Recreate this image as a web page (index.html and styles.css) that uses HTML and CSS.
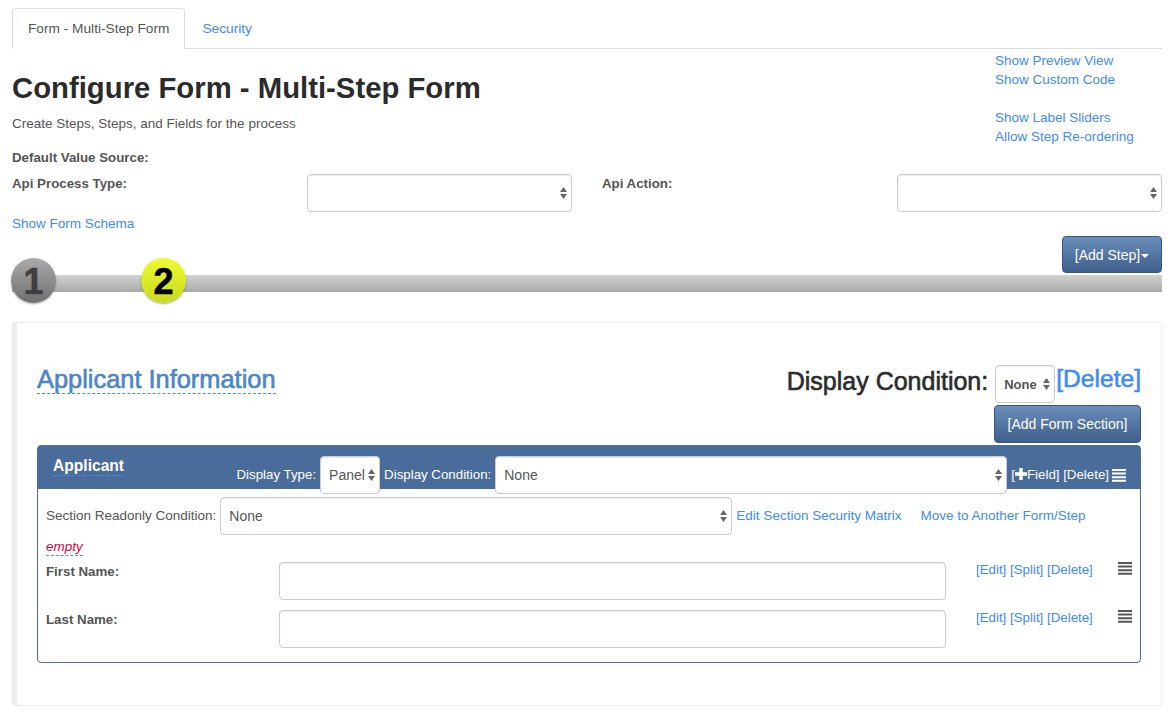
FILE: index.html
```html
<!DOCTYPE html>
<html lang="en">
<head>
    <meta charset="UTF-8">
    <meta name="viewport" content="width=device-width, initial-scale=1.0">
    <title>Configure Form - Multi-Step Form</title>
    <link rel="stylesheet" href="styles.css">
</head>
<body>
    <div class="page">
        <ul class="tabs">
            <li class="tab active">Form - Multi-Step Form</li>
            <li class="tab"><a href="#">Security</a></li>
        </ul>

        <div class="head">
            <div class="head-main">
                <h1>Configure Form - Multi-Step Form</h1>
                <p class="sub">Create Steps, Steps, and Fields for the process</p>
                <div class="label source-label">Default Value Source:</div>
            </div>
            <div class="head-links">
                <a href="#">Show Preview View</a>
                <a href="#">Show Custom Code</a>
                <span class="link-gap"></span>
                <a href="#">Show Label Sliders</a>
                <a href="#">Allow Step Re-ordering</a>
            </div>
        </div>

        <div class="api-row">
            <div class="label">Api Process Type:</div>
            <select class="control"><option></option></select>
            <div class="label">Api Action:</div>
            <select class="control"><option></option></select>
        </div>

        <a class="schema-link" href="#">Show Form Schema</a>

        <div class="step-tools">
            <button class="btn add-step">[Add Step]<span class="caret"></span></button>
        </div>

        <div class="steps">
            <div class="step step-off">1</div>
            <div class="step step-on">2</div>
        </div>

        <div class="callout">
            <div class="step-head">
                <a class="title-link" href="#">Applicant Information</a>
                <div class="step-actions">
                    <span class="cond-label">Display Condition:</span>
                    <select class="control mini bold-select"><option>None</option></select>
                    <a class="big-delete" href="#">[Delete]</a>
                </div>
            </div>
            <div class="add-section">
                <button class="btn">[Add Form Section]</button>
            </div>

            <div class="panel">
                <div class="panel-heading">
                    <span class="panel-title">Applicant</span>
                    <div class="panel-tools">
                        <span class="row-text">Display Type:</span>
                        <select class="control mini panel-type"><option>Panel</option></select>
                        <span class="row-text">Display Condition:</span>
                        <select class="control panel-cond"><option>None</option></select>
                        <span class="panel-links row-text">[<svg class="plus" viewBox="0 0 14 14"><path d="M5 0h4v5h5v4H9v5H5V9H0V5h5z"/></svg>Field] [Delete]</span>
                        <svg class="bars bars-light" viewBox="0 0 14 13"><path d="M0 0h14v2H0zM0 3.6h14v2H0zM0 7.2h14v2H0zM0 10.8h14v2H0z"/></svg>
                    </div>
                </div>
                <div class="panel-body">
                    <div class="readonly-row">
                        <span class="row-text">Section Readonly Condition:</span>
                        <select class="control readonly-select"><option>None</option></select>
                        <a class="row-text" href="#">Edit Section Security Matrix</a>
                        <a class="row-text move-link" href="#">Move to Another Form/Step</a>
                    </div>
                    <a class="empty" href="#">empty</a>
                    <div class="field">
                        <div class="label field-label">First Name:</div>
                        <input class="control field-input" type="text">
                        <div class="field-links"><a href="#">[Edit]</a> <a href="#">[Split]</a> <a href="#">[Delete]</a></div>
                        <svg class="bars" viewBox="0 0 14 13"><path d="M0 0h14v2H0zM0 3.6h14v2H0zM0 7.2h14v2H0zM0 10.8h14v2H0z"/></svg>
                    </div>
                    <div class="field">
                        <div class="label field-label">Last Name:</div>
                        <input class="control field-input" type="text">
                        <div class="field-links"><a href="#">[Edit]</a> <a href="#">[Split]</a> <a href="#">[Delete]</a></div>
                        <svg class="bars" viewBox="0 0 14 13"><path d="M0 0h14v2H0zM0 3.6h14v2H0zM0 7.2h14v2H0zM0 10.8h14v2H0z"/></svg>
                    </div>
                </div>
            </div>
        </div>
    </div>
</body>
</html>
```

FILE: styles.css
```css
* {
    box-sizing: border-box;
}
body {
    margin: 0;
    font-family: "Liberation Sans", Arial, sans-serif;
    font-size: 13.5px;
    line-height: 19px;
    color: #555;
    background-color: #fff;
}
a {
    color: #428bf0;
    text-decoration: none;
}
.page {
    padding: 8px 14px 0 12px;
}

/* tabs */
.tabs {
    display: flex;
    list-style: none;
    margin: 0;
    padding: 0;
    height: 41px;
    border-bottom: 1px solid #ddd;
    font-size: 13.7px;
}
.tab {
    padding: 11px 16px 10px 16px;
    margin-right: 1px;
    height: 41px;
}
.tab.active {
    background-color: #fff;
    border: 1px solid #ddd;
    border-bottom-color: #fff;
    border-radius: 4px 4px 0 0;
    padding: 10px 15px;
}

/* page head */
.head {
    display: flex;
    justify-content: space-between;
}
.head h1 {
    margin: 21px 0 0;
    font-size: 29.3px;
    line-height: 36px;
    font-weight: 700;
    color: #2b2b2b;
}
.sub {
    margin: 8px 0 0;
}
.label {
    font-weight: 700;
    font-size: 13.3px;
}
.source-label {
    margin-top: 15px;
}
.head-links {
    display: flex;
    flex-direction: column;
    width: 167px;
    padding-top: 2px;
}
.link-gap {
    height: 19px;
}

/* form controls */
.control {
    display: block;
    height: 38px;
    padding: 0 12px 0 8px;
    font-family: "Liberation Sans", Arial, sans-serif;
    font-size: 14px;
    color: #555;
    background-color: #fff;
    border: 1px solid #ccc;
    border-radius: 4px;
    box-shadow: inset 0 1px 1px rgba(0, 0, 0, 0.075);
}
select.control {
    appearance: none;
    -webkit-appearance: none;
    background-image: url("data:image/svg+xml,%3Csvg xmlns='http://www.w3.org/2000/svg' width='7' height='12'%3E%3Cpath fill='%23666' d='M3.5 0L7 5H0zM3.5 12L0 7h7z'/%3E%3C/svg%3E");
    background-repeat: no-repeat;
    background-position: right 4px center;
}
.api-row {
    display: grid;
    grid-template-columns: repeat(4, 1fr);
    column-gap: 30px;
    margin-top: 7px;
}
.schema-link {
    display: block;
    margin-top: 2px;
}

/* steps */
.step-tools {
    display: flex;
    justify-content: flex-end;
    position: relative;
    z-index: 1;
    margin-top: 3px;
    margin-bottom: -15px;
}
.btn {
    height: 38px;
    padding: 0 12px;
    font-family: "Liberation Sans", Arial, sans-serif;
    font-size: 14px;
    color: #fff;
    background: linear-gradient(to bottom, #6a8db9, #3f5f8c);
    border: 1px solid #36557f;
    border-radius: 4px;
}
.add-step {
    width: 100px;
    height: 37px;
    padding: 0;
}
.caret {
    display: inline-block;
    margin-left: 1px;
    vertical-align: middle;
    border-top: 4px solid #fff;
    border-left: 4px solid transparent;
    border-right: 4px solid transparent;
}
.steps {
    display: flex;
    gap: 85px;
    position: relative;
    height: 46px;
    margin-left: -1px;
}
.steps::before {
    content: "";
    position: absolute;
    left: 1px;
    right: 0;
    top: 17px;
    height: 17px;
    background: linear-gradient(to bottom, #d2d2d2, #a9a9a9);
}
.step {
    position: relative;
    width: 45px;
    height: 45px;
    border-radius: 50%;
    font-size: 36px;
    line-height: 47px;
    font-weight: 700;
    text-align: center;
    -webkit-text-stroke: 0.6px currentColor;
}
.step-off {
    color: #3f3f3f;
    background: linear-gradient(to bottom, #ababab, #6f6f6f);
    box-shadow: 0 1px 2px rgba(0, 0, 0, 0.35);
}
.step-on {
    color: #000;
    background: linear-gradient(to bottom, #ecfc30, #c9d81c);
    box-shadow: 0 1px 2px rgba(0, 0, 0, 0.35);
}

/* step content */
.callout {
    height: 384px;
    margin-top: 18px;
    padding: 0 20px;
    border: 1px solid #eee;
    border-left-width: 5px;
    border-radius: 3px;
}
.step-head {
    display: flex;
    justify-content: space-between;
    align-items: flex-start;
    height: 82px;
    padding-top: 42px;
}
.title-link {
    font-size: 25.4px;
    line-height: 28px;
    color: #4a86c8;
    border-bottom: 1px dashed #428bf0;
    -webkit-text-stroke: 0.6px #4a86c8;
}
.step-actions {
    display: flex;
    align-items: flex-start;
}
.cond-label {
    font-size: 25px;
    line-height: 34px;
    color: #2b2b2b;
    margin-top: -1px;
    margin-right: 7px;
    -webkit-text-stroke: 0.6px #2b2b2b;
}
.big-delete {
    margin-left: 1px;
    font-size: 24.6px;
    line-height: 28px;
    -webkit-text-stroke: 0.6px #428bf0;
}
.mini {
    flex: none;
    width: 60px;
    padding-right: 10px;
}
.bold-select {
    font-size: 13px;
    font-weight: 700;
}
.add-section {
    display: flex;
    justify-content: flex-end;
}
.add-section .btn {
    width: 147px;
    padding: 0;
}

/* section panel */
.panel {
    height: 218px;
    margin-top: 2px;
    border: 1px solid #4a6d9c;
    border-radius: 4px;
}
.panel-heading {
    display: flex;
    justify-content: space-between;
    height: 43px;
    padding: 10px 14px 0 15px;
    color: #fff;
    background-color: #4a6c9b;
}
.panel-title {
    font-size: 15.6px;
    font-weight: 700;
    height: 20px;
    line-height: 19px;
    border-bottom: 1px dashed #428bf0;
}
.panel-tools {
    display: flex;
    align-items: center;
    height: 38px;
    font-size: 13.3px;
}
.row-text {
    margin-top: -2px;
}
.panel-type {
    margin: 0 4px;
}
.panel-cond {
    flex: none;
    width: 512px;
    margin: 0 4px;
}
.panel-links {
    white-space: nowrap;
}
.plus {
    width: 12px;
    height: 12px;
    fill: #fff;
    vertical-align: -1px;
}
.bars {
    flex: none;
    width: 14px;
    height: 13px;
    fill: #555;
}
.bars-light {
    fill: #fff;
    margin-left: 3px;
}
.panel-body {
    padding: 8px 8px 0;
}
.readonly-row {
    display: flex;
    align-items: center;
    white-space: nowrap;
}
.readonly-select {
    flex: none;
    width: 512px;
    margin: 0 4px;
}
.move-link {
    margin-left: 19px;
}
.empty {
    display: inline-block;
    margin-top: 3px;
    margin-bottom: 6px;
    line-height: 17px;
    font-style: italic;
    color: #d6003c;
    border-bottom: 1px dashed #428bf0;
}
.field {
    display: flex;
    align-items: flex-start;
    height: 48px;
}
.field-label {
    width: 233px;
}
.field-input {
    width: 667px;
}
.field-links {
    width: 142px;
    margin-left: 30px;
    margin-top: -2px;
    font-size: 13.3px;
}
```
